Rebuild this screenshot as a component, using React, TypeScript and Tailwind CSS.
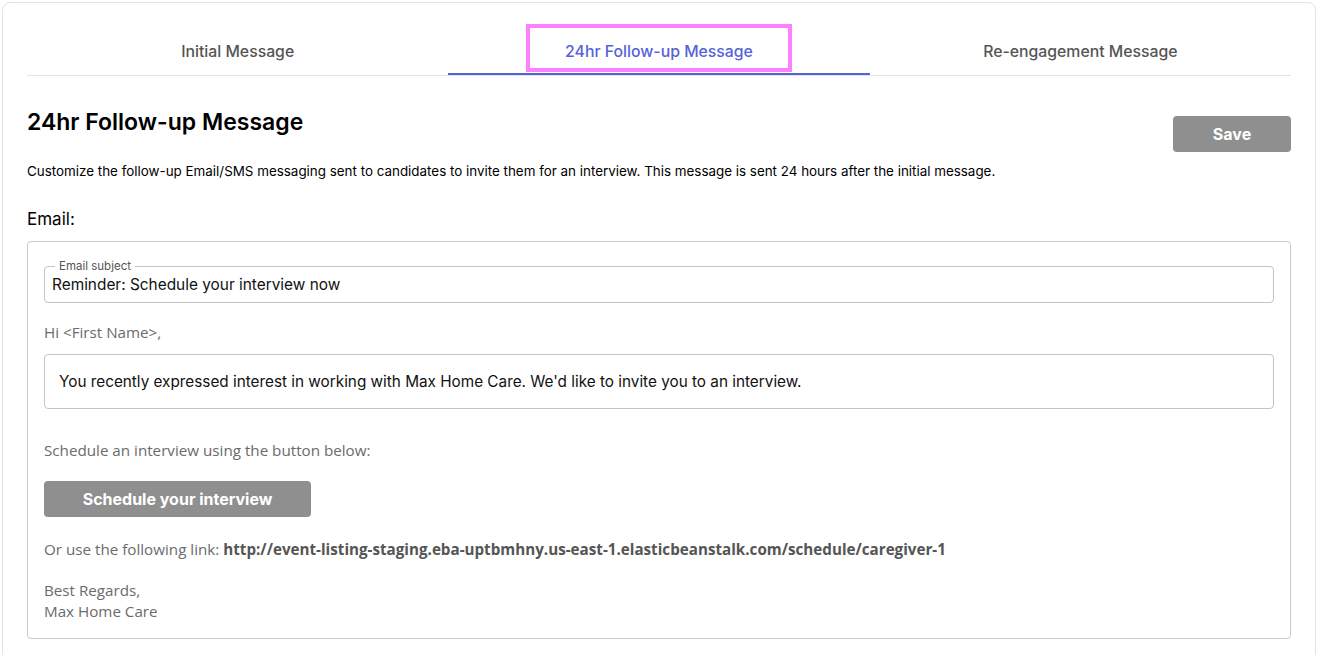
import React from 'react';

const tabs = ['Initial Message', '24hr Follow-up Message', 'Re-engagement Message'];

export default function App() {
  const [active, setActive] = React.useState(1);
  const [subject, setSubject] = React.useState('Reminder: Schedule your interview now');
  const [body, setBody] = React.useState(
    "You recently expressed interest in working with Max Home Care. We'd like to invite you to an interview."
  );

  return (
    <div className="min-h-screen bg-white p-[2px] font-['Inter',sans-serif]">
      <div className="min-h-[700px] rounded-t-[8px] border border-[#e2e2ea] bg-white px-[24px] pt-[21px]">
        {/* tabs */}
        <div className="grid grid-cols-3 border-b border-[#e3e3e8]">
          {tabs.map((t, i) => (
            <button
              key={t}
              onClick={() => setActive(i)}
              className={`flex h-[51px] items-start justify-center text-[15.8px] font-medium leading-[20px] ${
                active === i ? '-mb-px border-b-2 border-[#5563d8] text-[#5563d8]' : 'pt-[18px] text-[#555]'
              }`}
            >
              {active === i ? (
                <span className="flex h-[48px] w-[266px] items-center justify-center border-4 border-[#ff80ff] pt-[7px]">
                  {t}
                </span>
              ) : (
                t
              )}
            </button>
          ))}
        </div>

        {/* header */}
        <div className="mt-[31px] flex items-start justify-between">
          <h1 className="text-[23px] font-semibold leading-[30px] text-black">24hr Follow-up Message</h1>
          <button className="mt-[9px] h-[36px] w-[118px] rounded-[4px] bg-[#8f8f8f] text-[16px] font-bold text-white">
            Save
          </button>
        </div>
        <p className="mt-[9px] text-[13.4px] leading-[20px] text-black">
          Customize the follow-up Email/SMS messaging sent to candidates to invite them for an interview. This
          message is sent 24 hours after the initial message.
        </p>
        <h2 className="mt-[27px] text-[17px] leading-[22px] text-black">Email:</h2>

        {/* email card */}
        <div className="mt-[11px] rounded-[4px] border border-[#cbcbcb] px-[16px] pb-[16px] pt-[18px] font-['Open_Sans',sans-serif] text-[15.2px] text-[#6b6b6b]">
          <fieldset className="rounded-[4px] border border-[#c4c4c4] px-[7px] pb-[6px]">
            <legend className="ml-[3px] px-[4px] font-['Inter',sans-serif] text-[11.5px] leading-[12px] text-[#555]">
              Email subject
            </legend>
            <input
              value={subject}
              onChange={(e) => setSubject(e.target.value)}
              className="mt-[2px] w-full bg-transparent font-['Inter',sans-serif] text-[15.4px] leading-[22px] text-[#111] outline-none"
            />
          </fieldset>

          <p className="mt-[19px] leading-[20px]">Hi &lt;First Name&gt;,</p>

          <div className="mt-[12px] rounded-[4px] border border-[#c4c4c4] px-[14px] py-[15px]">
            <input
              value={body}
              onChange={(e) => setBody(e.target.value)}
              className="w-full bg-transparent font-['Inter',sans-serif] text-[15.3px] leading-[22px] text-[#111] outline-none"
            />
          </div>

          <p className="mt-[31px] leading-[20px]">Schedule an interview using the button below:</p>

          <button className="mt-[21px] h-[36px] w-[267px] rounded-[4px] bg-[#8f8f8f] font-['Inter',sans-serif] text-[16px] font-bold text-white">
            Schedule your interview
          </button>

          <p className="mt-[22px] leading-[20px]">
            Or use the following link:{' '}
            <span className="font-bold text-[#555]">
              http://event-listing-staging.eba-uptbmhny.us-east-1.elasticbeanstalk.com/schedule/caregiver-1
            </span>
          </p>

          <p className="mt-[21px] leading-[21px]">
            Best Regards,
            <br />
            Max Home Care
          </p>
        </div>
      </div>
    </div>
  );
}
